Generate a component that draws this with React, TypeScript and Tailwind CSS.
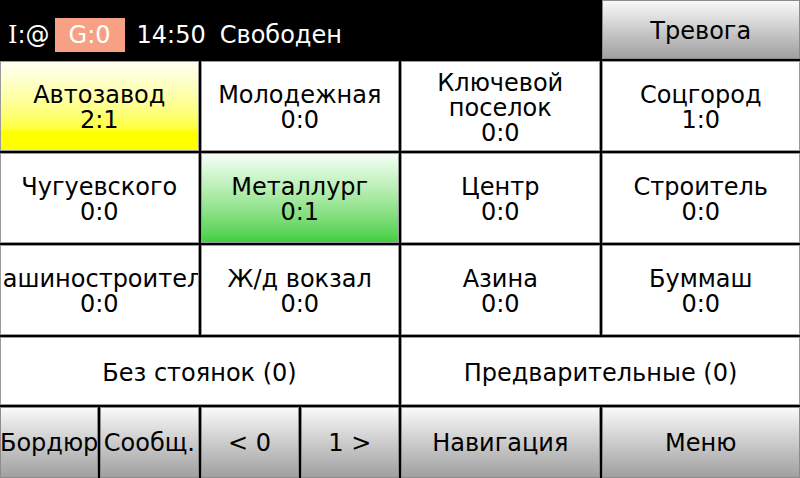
import React from "react"

type Stop = {
  name: string[]
  score: string
  tone?: "yellow" | "green"
}

const stops: Stop[] = [
  { name: ["Автозавод"], score: "2:1", tone: "yellow" },
  { name: ["Молодежная"], score: "0:0" },
  { name: ["Ключевой", "поселок"], score: "0:0" },
  { name: ["Соцгород"], score: "1:0" },
  { name: ["Чугуевского"], score: "0:0" },
  { name: ["Металлург"], score: "0:1", tone: "green" },
  { name: ["Центр"], score: "0:0" },
  { name: ["Строитель"], score: "0:0" },
  { name: ["Машиностроитель"], score: "0:0" },
  { name: ["Ж/д вокзал"], score: "0:0" },
  { name: ["Азина"], score: "0:0" },
  { name: ["Буммаш"], score: "0:0" },
]

const toneClass = {
  white: "bg-white",
  yellow: "bg-linear-to-b from-[#fffff2] to-[#ffff00] to-80%",
  green: "bg-linear-to-b from-[#f6fff6] to-[#3fcf3f]",
}

const btn = "bg-linear-to-b from-[#f9f9f9] to-[#a0a0a0] border border-[#8c8c8c]"

function StopCell({ stop }: { stop: Stop }) {
  return (
    <div
      className={`${toneClass[stop.tone ?? "white"]} border border-[#9a9a9a] flex flex-col items-center justify-center pt-[4px] overflow-hidden whitespace-nowrap leading-[25px] text-black`}
    >
      {stop.name.map((line) => (
        <span key={line}>{line}</span>
      ))}
      <span>{stop.score}</span>
    </div>
  )
}

export default function App() {
  const bottom = [
    { label: "Бордюр", span: "col-span-1" },
    { label: "Сообщ.", span: "col-span-1" },
    { label: "< 0", span: "col-span-1" },
    { label: "1 >", span: "col-span-1" },
    { label: "Навигация", span: "col-span-2" },
    { label: "Меню", span: "col-span-2" },
  ]

  return (
    <div className="w-[800px] h-[478px] bg-black flex flex-col overflow-hidden font-['DejaVu_Sans',sans-serif] text-[24px]">
      {/* status bar */}
      <div className="h-[60px] grid grid-cols-4 gap-[2px] shrink-0">
        <div className="col-span-3 flex items-center text-white pl-[8px] pt-[10px]">
          <span className="font-['DejaVu_Serif',serif]">I</span>
          <span>:@</span>
          <span className="ml-[5px] bg-[#f7a083] w-[70px] h-[34px] flex items-center justify-center">G:0</span>
          <span className="ml-[12px]">14:50</span>
          <span className="ml-[14px]">Свободен</span>
        </div>
        <div className={`${btn} h-[59px] flex items-center justify-center pt-[2px] text-black`}>Тревога</div>
      </div>

      {/* stops */}
      <div className="flex-1 grid grid-cols-4 grid-rows-[90px_90px_90px_68px] gap-[2px] pt-[1px]">
        {stops.map((s) => (
          <StopCell key={s.name.join(" ")} stop={s} />
        ))}
        <div className="col-span-2 bg-white border border-[#9a9a9a] flex items-center justify-center pt-[4px]">Без стоянок (0)</div>
        <div className="col-span-2 bg-white border border-[#9a9a9a] flex items-center justify-center pt-[4px]">Предварительные (0)</div>
      </div>

      {/* actions */}
      <div className="h-[71px] mt-[2px] grid grid-cols-8 gap-[2px] shrink-0">
        {bottom.map((b) => (
          <div key={b.label} className={`${b.span} ${btn} flex items-center justify-center whitespace-nowrap overflow-hidden text-black`}>
            {b.label}
          </div>
        ))}
      </div>
    </div>
  )
}
